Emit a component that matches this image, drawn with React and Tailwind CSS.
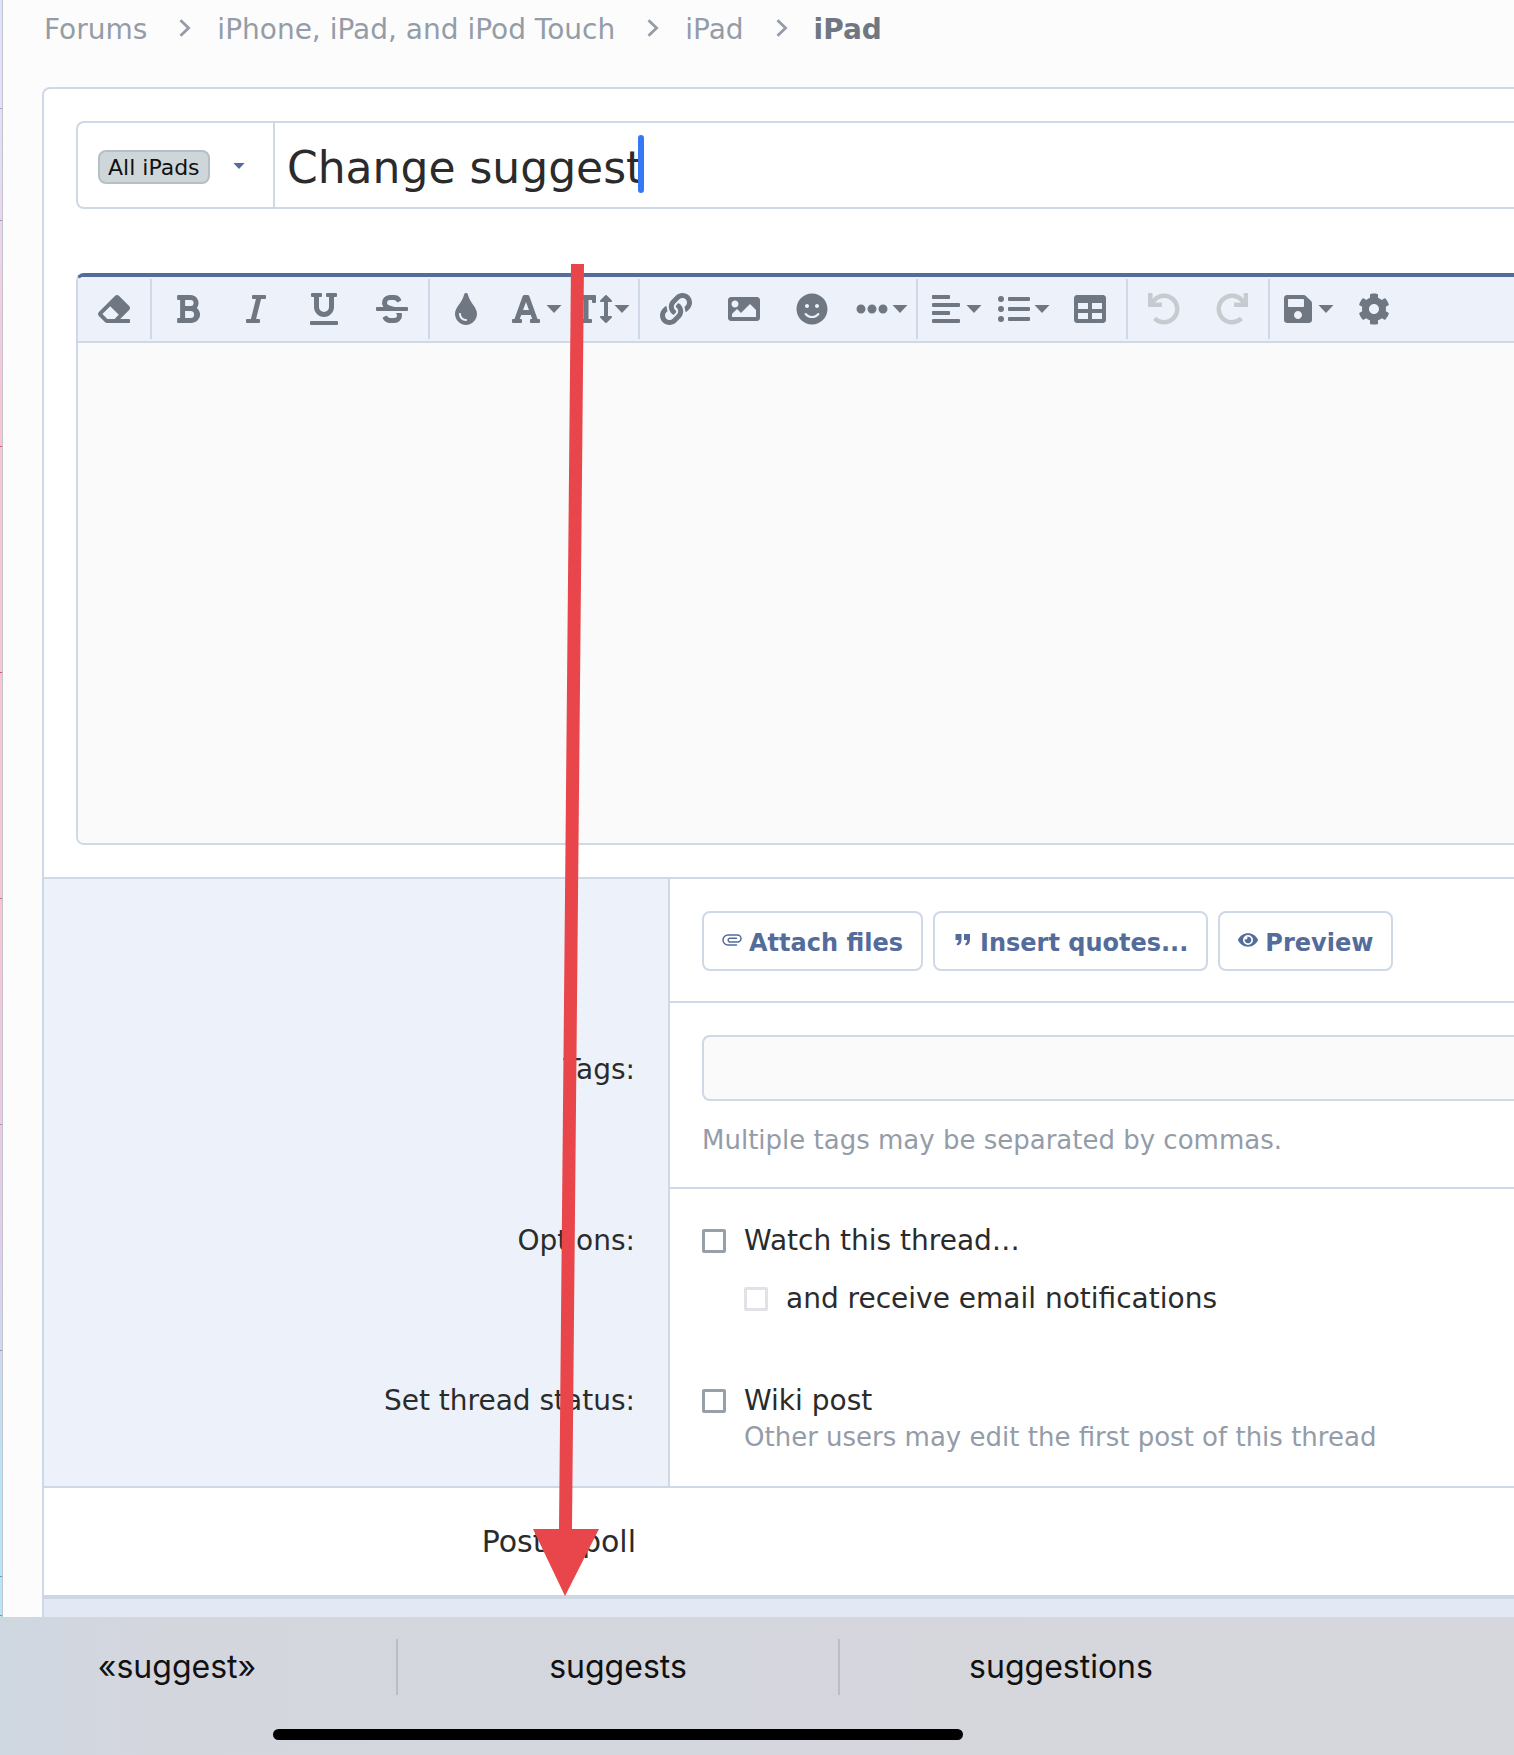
import {
  FaAlignLeft, FaBold, FaCog, FaEllipsisH, FaEraser, FaEye, FaFont, FaImage, FaItalic, FaLink,
  FaListUl, FaRedo, FaSave, FaSmile, FaStrikethrough, FaTable, FaTextHeight, FaTint, FaUnderline, FaUndo,
} from "react-icons/fa";

const toolGroups = [
  [{ label: "Remove formatting", icon: FaEraser }],
  [
    { label: "Bold", icon: FaBold },
    { label: "Italic", icon: FaItalic },
    { label: "Underline", icon: FaUnderline },
    { label: "Strike-through", icon: FaStrikethrough },
  ],
  [
    { label: "Text color", icon: FaTint },
    { label: "Font family", icon: FaFont, menu: true },
    { label: "Font size", icon: FaTextHeight, menu: true, iconClass: "size-9" },
  ],
  [
    { label: "Insert link", icon: FaLink },
    { label: "Insert image", icon: FaImage },
    { label: "Smilies", icon: FaSmile },
    { label: "Insert", icon: FaEllipsisH, menu: true },
  ],
  [
    { label: "Alignment", icon: FaAlignLeft, menu: true },
    { label: "List", icon: FaListUl, menu: true },
    { label: "Insert table", icon: FaTable },
  ],
  [
    { label: "Undo", icon: FaUndo, disabled: true },
    { label: "Redo", icon: FaRedo, disabled: true },
  ],
  [
    { label: "Drafts", icon: FaSave, menu: true },
    { label: "Toggle BB code", icon: FaCog },
  ],
];

const crumbs = ["Forums", "iPhone, iPad, and iPod Touch", "iPad"];

// lines of the neighbouring window that show along the left edge
const edgeTicks = [
  "mt-[108px] bg-[#a8a4d0]",
  "mt-[111px] bg-[#b18fc4]",
  "mt-[225px] bg-[#d9586f]",
  "mt-[225px] bg-[#d9586f]",
  "mt-[225px] bg-[#c96a8c]",
  "mt-[225px] bg-[#b98bb5]",
  "mt-[225px] bg-[#a893c4]",
  "mt-[225px] bg-[#4fa3d1]",
  "mt-[38px] bg-[#4fa3d1]",
];

function Caret({ className }) {
  return (
    <svg viewBox="0 0 16 8" className={className} fill="currentColor" aria-hidden="true">
      <path d="M.5 0h15L8 8z" />
    </svg>
  );
}

function Chevron() {
  return (
    <svg viewBox="0 0 12 18" className="w-3 h-[18px] mb-1 text-[#949ca8]" fill="none" stroke="currentColor" strokeWidth="2.8" aria-hidden="true">
      <path d="M1.5 1.2 9.6 9l-8.100 7.800" />
    </svg>
  );
}

function PaperclipIcon() {
  return (
    <svg viewBox="0 0 20 12" className="w-5 h-3 mb-[6px]" fill="none" stroke="currentColor" strokeWidth="1.500" strokeLinecap="round" aria-hidden="true">
      <path d="M14.500 11H6A5 5 0 0 1 6 1h9.500a3.500 3.500 0 0 1 0 7H7.500a2 2 0 0 1 0-3.800H14.500" />
    </svg>
  );
}

function QuoteIcon() {
  return (
    <svg viewBox="0 0 16 12" className="w-4 h-3 mb-[6px]" fill="currentColor" aria-hidden="true">
      <path d="M.5 0h6v5.500C6.500 9 5 11 2.500 11.500L1.500 10C3 9 3.500 8 3.500 6H.5zM9 0h6v5.500c0 3.500-1.500 5.500-4 6L10 10c1.500-1 2-2 2-4H9z" />
    </svg>
  );
}

function ToolButton({ label, icon: Icon, menu, disabled, iconClass = "h-8 w-auto" }) {
  return (
    <button
      type="button"
      aria-label={label}
      disabled={disabled}
      className={`w-[68px] h-[60px] flex items-center ${menu ? "justify-between pl-2 pr-[6px]" : "justify-center"} ${
        disabled ? "text-[#c7cace]" : "text-[#6f7782]"
      }`}
    >
      <span className={menu ? "w-9 shrink-0 flex justify-center" : "flex"}>
        <Icon className={`shrink-0 ${iconClass}`} />
      </span>
      {menu && <Caret className="w-4 h-2 shrink-0" />}
    </button>
  );
}

function Row({ label, htmlFor, divided, labelClass, className, children }) {
  return (
    <div className="flex">
      <div className="w-[626px] shrink-0 bg-[#edf2fa] border-r-2 border-[#cfd8e6] pr-[33px] text-right">
        {label && <label htmlFor={htmlFor} className={`block ${labelClass}`}>{label}</label>}
      </div>
      <div className={`flex-1 pl-8 ${divided ? "border-b-2 border-[#cfd8e6]" : ""} ${className}`}>{children}</div>
    </div>
  );
}

function Check({ id, label, muted }) {
  return (
    <div className="flex items-center gap-[18px]">
      <input
        id={id}
        type="checkbox"
        disabled={muted}
        className={`appearance-none size-6 rounded-xs border-[3px] bg-white ${muted ? "border-[#e0e2e7]" : "border-[#979fab]"}`}
      />
      <label htmlFor={id}>{label}</label>
    </div>
  );
}

const actionClass =
  "h-[60px] px-[18px] pt-1 flex items-center gap-[7px] rounded-lg border-2 border-[#cfd8e6] bg-white text-2xl font-bold text-[#536c9a]";

export default function App() {
  return (
    <div className="relative h-screen flex flex-col overflow-hidden bg-[#fcfcfc] font-['Verdana','DejaVu_Sans',sans-serif] text-[28px] leading-10 text-[#2b2b2b]">
      <div className="flex-1 min-h-0 flex overflow-hidden">
        <div className="w-[3px] shrink-0 border-r border-[#c4c4cb] bg-[linear-gradient(#dfe4fb,#e6dcf6_10%,#f9c4d6_25%,#f9c4d6_58%,#ddd0ee_78%,#b5e6fa_92%)]">
          {edgeTicks.map((tick, i) => (
            <div key={i} className={`h-px ${tick}`} />
          ))}
        </div>
        <div className="flex-1 min-w-0 pl-[39px]">
          <nav aria-label="Breadcrumb" className="h-[87px] pt-[10px] pl-[2px]">
            <ol className="flex items-center text-[#949ca8]">
              {crumbs.map((crumb) => (
                <li key={crumb} className="flex items-center">
                  <a href="#">{crumb}</a>
                  <span className="pl-8 pr-[26px]"><Chevron /></span>
                </li>
              ))}
              <li className="font-bold text-[#6f7782]"><a href="#">iPad</a></li>
            </ol>
          </nav>

          <form className="border-2 border-r-0 border-[#cfd8e6] rounded-tl-lg bg-white">
            <div className="pl-8 pt-8 pb-8">
              <div className="h-[88px] flex border-2 border-r-0 border-[#cfd8e6] rounded-l-lg">
                <button type="button" className="w-[197px] shrink-0 pl-5 pt-1 flex items-center gap-[23px] border-r-2 border-[#cfd8e6]">
                  <span className="h-[34px] px-2 pt-[2px] flex items-center rounded-lg border-2 border-[#b3c0c6] bg-[#cfd6d9] text-[22px] text-[#111]">All iPads</span>
                  <Caret className="w-3 h-[6px] mb-[2px] text-[#536c9a]" />
                </button>
                <div className="relative flex-1">
                  <input aria-label="Title" defaultValue="Change suggest" className="w-full h-full pl-3 pt-1 text-[44px] outline-none" />
                  <span className="absolute left-[363px] top-3 w-[6px] h-[58px] rounded-full bg-[#3478f6]" />
                </div>
              </div>

              <div className="mt-16 border-2 border-t-4 border-r-0 border-[#cfd8e6] border-t-[#536c9a] rounded-l-lg overflow-hidden">
                <div className="h-[66px] flex items-center bg-[#edf2fa] border-b-2 border-[#cfd8e6]">
                  {toolGroups.map((tools, i) => (
                    <div key={i} className="flex px-[2px] border-r-2 border-[#cfd8e6] last:border-r-0">
                      {tools.map((tool) => <ToolButton key={tool.label} {...tool} />)}
                    </div>
                  ))}
                </div>
                <textarea aria-label="Message" className="block w-full h-[500px] resize-none bg-[#fafafa] outline-none" />
              </div>
            </div>

            <div className="border-y-2 border-[#cfd8e6]">
              <Row divided className="pt-8 pb-[30px] flex gap-[10px]">
                <button type="button" className={actionClass}><PaperclipIcon />Attach files</button>
                <button type="button" className={actionClass}><span className="px-[2px]"><QuoteIcon /></span>Insert quotes...</button>
                <button type="button" className={actionClass}><FaEye className="w-5 mb-[6px]" />Preview</button>
              </Row>
              <Row label="Tags:" htmlFor="tags" divided labelClass="pt-[47px]" className="pt-8 pb-[29px]">
                <input id="tags" className="block w-full h-[66px] px-3 rounded-l-lg border-2 border-r-0 border-[#cfd8e6] bg-[#fafafa] outline-none" />
                <p className="mt-[21px] text-[26px] leading-9 text-[#949ca8]">Multiple tags may be separated by commas.</p>
              </Row>
              <Row label="Options:" htmlFor="watch" labelClass="pt-8" className="pt-8 pb-[46px]">
                <Check id="watch" label="Watch this thread…" />
                <div className="pl-[42px] pt-[18px]">
                  <Check id="email" label="and receive email notifications" muted />
                </div>
              </Row>
              <Row label="Set thread status:" htmlFor="wiki" labelClass="pt-4" className="pt-4 pb-[33px]">
                <Check id="wiki" label="Wiki post" />
                <p className="pl-[42px] text-[26px] leading-8 text-[#949ca8]">Other users may edit the first post of this thread</p>
              </Row>
            </div>
            <div className="h-[107px] w-[626px] pt-[34px] pr-[34px] text-right text-[30px]">
              <a href="#">Post a poll</a>
            </div>
            <div className="h-20 border-t-4 border-[#cdd7e3] bg-[#e2e9f4]" />
          </form>
        </div>
      </div>

      <div className="h-[138px] shrink-0 bg-linear-to-r from-[#cfd7e0] via-[#d4d6de] via-10% to-[#d6d7dc] font-['Inter',sans-serif] text-[32px] text-[#111]">
        <div className="h-[100px] flex items-center">
          <button type="button" className="w-[398px] h-14 pr-[42px] border-r-2 border-[#bbbdc6]">«suggest»</button>
          <button type="button" className="w-[442px] h-14 border-r-2 border-[#bbbdc6]">suggests</button>
          <button type="button" className="w-[442px] h-14">suggestions</button>
        </div>
        <div className="ml-[273px] mt-3 w-[690px] h-[11px] rounded-full bg-black" />
      </div>

      <svg className="absolute left-[530px] top-[264px] w-[70px] h-[1332px]" viewBox="0 0 70 1332" fill="#e8464a" aria-hidden="true">
        <path d="M41 0h13L42 1265h27l-34 67-32-67h26z" />
      </svg>
    </div>
  );
}
